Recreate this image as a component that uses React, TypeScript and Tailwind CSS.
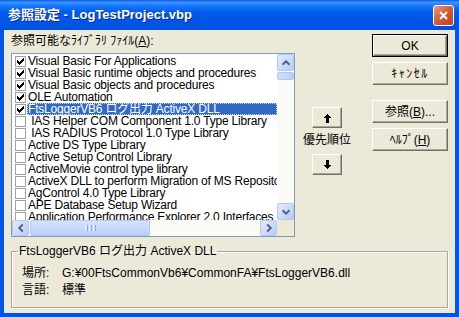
import type { ReactNode } from 'react';

const rows = [
  { on: true, text: 'Visual Basic For Applications' },
  { on: true, text: 'Visual Basic runtime objects and procedures' },
  { on: true, text: 'Visual Basic objects and procedures' },
  { on: true, text: 'OLE Automation' },
  { on: true, text: 'FtsLoggerVB6 ログ出力 ActiveX DLL', sel: true },
  { on: false, text: '\u00a0IAS Helper COM Component 1.0 Type Library' },
  { on: false, text: '\u00a0IAS RADIUS Protocol 1.0 Type Library' },
  { on: false, text: 'Active DS Type Library' },
  { on: false, text: 'Active Setup Control Library' },
  { on: false, text: 'ActiveMovie control type library' },
  { on: false, text: 'ActiveX DLL to perform Migration of MS Repository V1 to V2' },
  { on: false, text: 'AgControl 4.0 Type Library' },
  { on: false, text: 'APE Database Setup Wizard' },
  { on: false, text: 'Application Performance Explorer 2.0 Interfaces' },
];

function Check({ on }: { on: boolean }) {
  return (
    <span className="ml-[3px] flex h-[11px] w-[11px] shrink-0 items-center justify-center border border-[#A0A0A0] bg-white">
      {on && (
        <svg width="9" height="9" viewBox="0 0 9 9" shapeRendering="crispEdges">
          <path d="M1 3h1v1h1v1h1V4h1V3h1V2h1V1h1v3H7v1H6v1H5v1H4v1H3V7H2V6H1z" fill="#000" />
        </svg>
      )}
    </span>
  );
}

const arrows = {
  up: 'M4 10 L8 6 L12 10',
  down: 'M4 6 L8 10 L12 6',
  left: 'M10 4 L6 8 L10 12',
  right: 'M6 4 L10 8 L6 12',
};

function ScrollBtn({ dir, size }: { dir: keyof typeof arrows; size: string }) {
  return (
    <div
      className={`flex shrink-0 items-center justify-center rounded-[2px] border border-[#B4C7F5] bg-[linear-gradient(135deg,#E3ECFE,#B8CBF7)] ${size}`}
    >
      <svg width="14" height="14" viewBox="0 0 16 16">
        <path d={arrows[dir]} fill="none" stroke="#4D6185" strokeWidth="2.2" />
      </svg>
    </div>
  );
}

function Button({ children, def = false }: { children: ReactNode; def?: boolean }) {
  const face =
    'flex flex-1 items-center justify-center border border-t-white border-l-white border-r-[#716F64] border-b-[#716F64] shadow-[inset_-1px_-1px_0_#ACA899] text-[12px]';
  if (def) {
    return (
      <div className="flex h-[23px] w-[76px] border border-black">
        <div className={face}>{children}</div>
      </div>
    );
  }
  return (
    <div className="flex h-[23px] w-[76px]">
      <div className={face}>{children}</div>
    </div>
  );
}

function ArrowBtn({ up }: { up: boolean }) {
  return (
    <div className="flex h-[21px] w-[30px] items-center justify-center border border-t-white border-l-white border-r-[#716F64] border-b-[#716F64] shadow-[inset_-1px_-1px_0_#ACA899]">
      <svg width="9" height="10" viewBox="0 0 9 10" shapeRendering="crispEdges">
        {up ? (
          <path d="M4 1h1v1h1v1h1v1h1v1H6v5H3V5H1V4h1V3h1V2h1z" fill="#000" />
        ) : (
          <path d="M3 0h3v5h2v1H7v1H6v1H5v1H4V8H3V7H2V6H1V5h2z" fill="#000" />
        )}
      </svg>
    </div>
  );
}

export default function App() {
  return (
    <div className="flex h-[317px] w-[459px] flex-col bg-[#0055E5] font-['Liberation_Sans','Noto_Sans_CJK_JP',sans-serif] text-black">
      {/* Title bar */}
      <div className="flex h-[30px] shrink-0 items-center bg-[linear-gradient(to_bottom,#0A5BEB_0%,#3D93FF_8%,#1A7BFE_18%,#005BEC_40%,#0055E5_80%,#0050DC_100%)] pl-[8px] pr-[5px]">
        <span className="flex-1 text-[13px] font-bold text-white [text-shadow:1px_1px_0_#0B2A8A]">
          参照設定 - LogTestProject.vbp
        </span>
        <div className="flex h-[21px] w-[21px] items-center justify-center rounded-[3px] border border-white bg-[linear-gradient(135deg,#EA9A80,#D4593A_50%,#C0401F)]">
          <svg width="11" height="11" viewBox="0 0 11 11">
            <path d="M2 2 L9 9 M9 2 L2 9" stroke="#fff" strokeWidth="2" />
          </svg>
        </div>
      </div>

      {/* Body */}
      <div className="mx-[4px] mb-[4px] flex flex-1 flex-col bg-[#ECE9D8] px-[7px]">
        <div className="flex h-[207px] shrink-0">
          {/* Library list */}
          <div className="flex w-[284px] flex-col">
            <div className="mt-[4px] h-[14px] text-[12px] leading-[14px]">
              参照可能なﾗｲﾌﾞﾗﾘ ﾌｧｲﾙ(<span className="underline">A</span>):
            </div>
            <div className="mt-[5px] flex flex-1 flex-col border border-[#7F9DB9] bg-white">
              <div className="flex h-[166px]">
                <div className="flex flex-1 flex-col overflow-hidden pt-[1px] text-[12px] leading-[12px] tracking-[-0.2px]">
                  {rows.map((r) => (
                    <div key={r.text} className="flex h-[12px] shrink-0 items-center whitespace-nowrap">
                      <Check on={r.on} />
                      {r.sel ? (
                        <span className="ml-[1px] flex h-[12px] flex-1 items-center bg-[#316AC5] pl-[1px] text-white outline-1 -outline-offset-1 outline-dotted outline-[#C8D8F0]">
                          {r.text}
                        </span>
                      ) : (
                        <span className="ml-[2px]">{r.text}</span>
                      )}
                    </div>
                  ))}
                </div>
                <div className="flex w-[17px] flex-col bg-[#FAFAF6]">
                  <ScrollBtn dir="up" size="h-[17px] w-[17px]" />
                  <div className="mt-[1px] h-[8px] w-[17px] rounded-[2px] border border-[#B4C7F5] bg-[linear-gradient(to_right,#D4E1FC,#BCCEF8)]" />
                  <div className="flex-1" />
                  <ScrollBtn dir="down" size="h-[17px] w-[17px]" />
                </div>
              </div>
              <div className="flex h-[16px]">
                <div className="flex flex-1 items-center bg-[#FAFAF6]">
                  <ScrollBtn dir="left" size="h-[16px] w-[17px]" />
                  <div className="ml-[1px] flex h-[16px] w-[120px] items-center justify-center gap-[1px] rounded-[2px] border border-[#B4C7F5] bg-[linear-gradient(to_bottom,#D6E3FD,#BCCEF8)]">
                    <span className="h-[6px] w-[1px] bg-[#EEF3FE]" />
                    <span className="h-[6px] w-[1px] bg-[#8CA9EE]" />
                    <span className="h-[6px] w-[1px] bg-[#EEF3FE]" />
                    <span className="h-[6px] w-[1px] bg-[#8CA9EE]" />
                    <span className="h-[6px] w-[1px] bg-[#EEF3FE]" />
                    <span className="h-[6px] w-[1px] bg-[#8CA9EE]" />
                  </div>
                  <div className="flex-1" />
                  <ScrollBtn dir="right" size="h-[16px] w-[17px]" />
                </div>
                <div className="w-[17px] bg-[#ECE9D8]" />
              </div>
            </div>
          </div>

          {/* Priority */}
          <div className="flex w-[64px] flex-col items-center pt-[77px]">
            <ArrowBtn up />
            <div className="mt-[4px] h-[16px] text-[12px] leading-[16px]">優先順位</div>
            <div className="mt-[6px]">
              <ArrowBtn up={false} />
            </div>
          </div>

          {/* Buttons */}
          <div className="ml-[13px] flex w-[76px] flex-col gap-[5px] pt-[4px]">
            <Button def>OK</Button>
            <Button>
              <span className="tracking-[1.5px]">ｷｬﾝｾﾙ</span>
            </Button>
            <div className="mt-[10px]">
              <Button>
                参照(<span className="underline">B</span>)...
              </Button>
            </div>
            <Button>
              ﾍﾙﾌﾟ(<span className="underline">H</span>)
            </Button>
          </div>
        </div>

        {/* Selected library details */}
        <fieldset className="mt-[7px] mb-[5px] flex-1 border border-[#ACA899] px-[10px] text-[12px] shadow-[inset_1px_1px_0_#fff,1px_1px_0_#fff]">
          <legend className="-ml-[4px] px-[1px] leading-[14px]">FtsLoggerVB6 ログ出力 ActiveX DLL</legend>
          <div className="mt-[6px] flex h-[17px] items-center">
            <span className="w-[40px]">場所:</span>
            <span>G:¥00FtsCommonVb6¥CommonFA¥FtsLoggerVB6.dll</span>
          </div>
          <div className="flex h-[17px] items-center">
            <span className="w-[40px]">言語:</span>
            <span>標準</span>
          </div>
        </fieldset>
      </div>
    </div>
  );
}
